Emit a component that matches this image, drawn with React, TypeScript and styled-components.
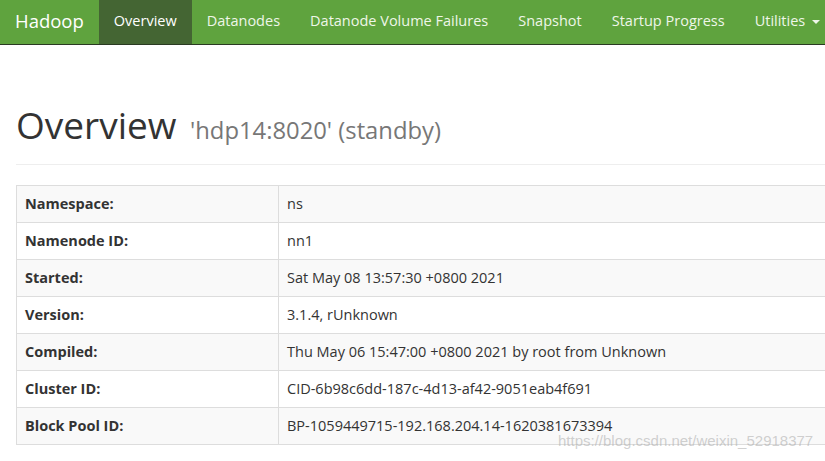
import styled, { createGlobalStyle } from 'styled-components';

const GlobalStyle = createGlobalStyle`
  html, body {
    margin: 0;
    padding: 0;
    background: #fff;
    overflow: hidden;
  }
  body {
    font-family: "Open Sans", "Noto Sans", sans-serif;
    font-size: 14.5px;
    line-height: 20px;
    color: #333;
  }
`;

const Page = styled.div`
  position: relative;
  width: 825px;
  height: 461px;
  overflow: hidden;
`;

const Navbar = styled.nav`
  display: flex;
  align-items: stretch;
  height: 44px;
  background: #5fa33e;
  border-bottom: 1px solid #2a3a22;
  white-space: nowrap;
`;

const Brand = styled.div`
  display: flex;
  align-items: center;
  padding: 0 15px 2px;
  font-size: 18.5px;
  color: #fff;
`;

const NavItem = styled.a<{ $active?: boolean }>`
  display: flex;
  align-items: center;
  gap: 7px;
  padding: 0 15px 3px;
  color: ${({ $active }) => ($active ? '#fff' : '#eef6e8')};
  background: ${({ $active }) => ($active ? '#446533' : 'transparent')};
  text-decoration: none;
  font-size: 14.5px;
`;

const Caret = styled.span`
  display: inline-block;
  width: 0;
  height: 0;
  margin-top: 2px;
  border-top: 4px solid #eef6e8;
  border-left: 4px solid transparent;
  border-right: 4px solid transparent;
`;

const Container = styled.div`
  width: 1100px;
  padding: 0 16px;
`;

const PageHeader = styled.div`
  margin-top: 60px;
  padding-bottom: 14px;
  border-bottom: 1px solid #eee;
`;

const Title = styled.h1`
  margin: 0;
  font-size: 37px;
  font-weight: 400;
  line-height: 40px;
  color: #333;
`;

const Subtitle = styled.small`
  margin-left: 4px;
  font-size: 23.8px;
  color: #777;
`;

const InfoTable = styled.table`
  margin-top: 20px;
  width: 100%;
  border-collapse: collapse;
  border: 1px solid #ddd;
`;

const Row = styled.tr`
  &:nth-child(odd) {
    background: #f9f9f9;
  }
`;

const Label = styled.th`
  width: 245px;
  padding: 8px;
  border: 1px solid #ddd;
  text-align: left;
  font-weight: 700;
  line-height: 20px;
`;

const Value = styled.td`
  padding: 8px;
  border: 1px solid #ddd;
  line-height: 20px;
`;

const Watermark = styled.div`
  position: absolute;
  left: 558px;
  top: 431px;
  font-family: "Liberation Sans", Arial, sans-serif;
  font-size: 15px;
  color: rgba(170, 170, 170, 0.55);
  pointer-events: none;
`;

const navItems = [
  'Overview',
  'Datanodes',
  'Datanode Volume Failures',
  'Snapshot',
  'Startup Progress',
];

const rows: [string, string][] = [
  ['Namespace:', 'ns'],
  ['Namenode ID:', 'nn1'],
  ['Started:', 'Sat May 08 13:57:30 +0800 2021'],
  ['Version:', '3.1.4, rUnknown'],
  ['Compiled:', 'Thu May 06 15:47:00 +0800 2021 by root from Unknown'],
  ['Cluster ID:', 'CID-6b98c6dd-187c-4d13-af42-9051eab4f691'],
  ['Block Pool ID:', 'BP-1059449715-192.168.204.14-1620381673394'],
];

const App = () => (
  <Page>
    <GlobalStyle />
    <Navbar>
      <Brand>Hadoop</Brand>
      {navItems.map((item) => (
        <NavItem key={item} $active={item === 'Overview'}>
          {item}
        </NavItem>
      ))}
      <NavItem>
        Utilities
        <Caret />
      </NavItem>
    </Navbar>
    <Container>
      <PageHeader>
        <Title>
          Overview <Subtitle>'hdp14:8020' (standby)</Subtitle>
        </Title>
      </PageHeader>
      <InfoTable>
        <tbody>
          {rows.map(([label, value]) => (
            <Row key={label}>
              <Label>{label}</Label>
              <Value>{value}</Value>
            </Row>
          ))}
        </tbody>
      </InfoTable>
    </Container>
    <Watermark>https://blog.csdn.net/weixin_52918377</Watermark>
  </Page>
);

export default App;
